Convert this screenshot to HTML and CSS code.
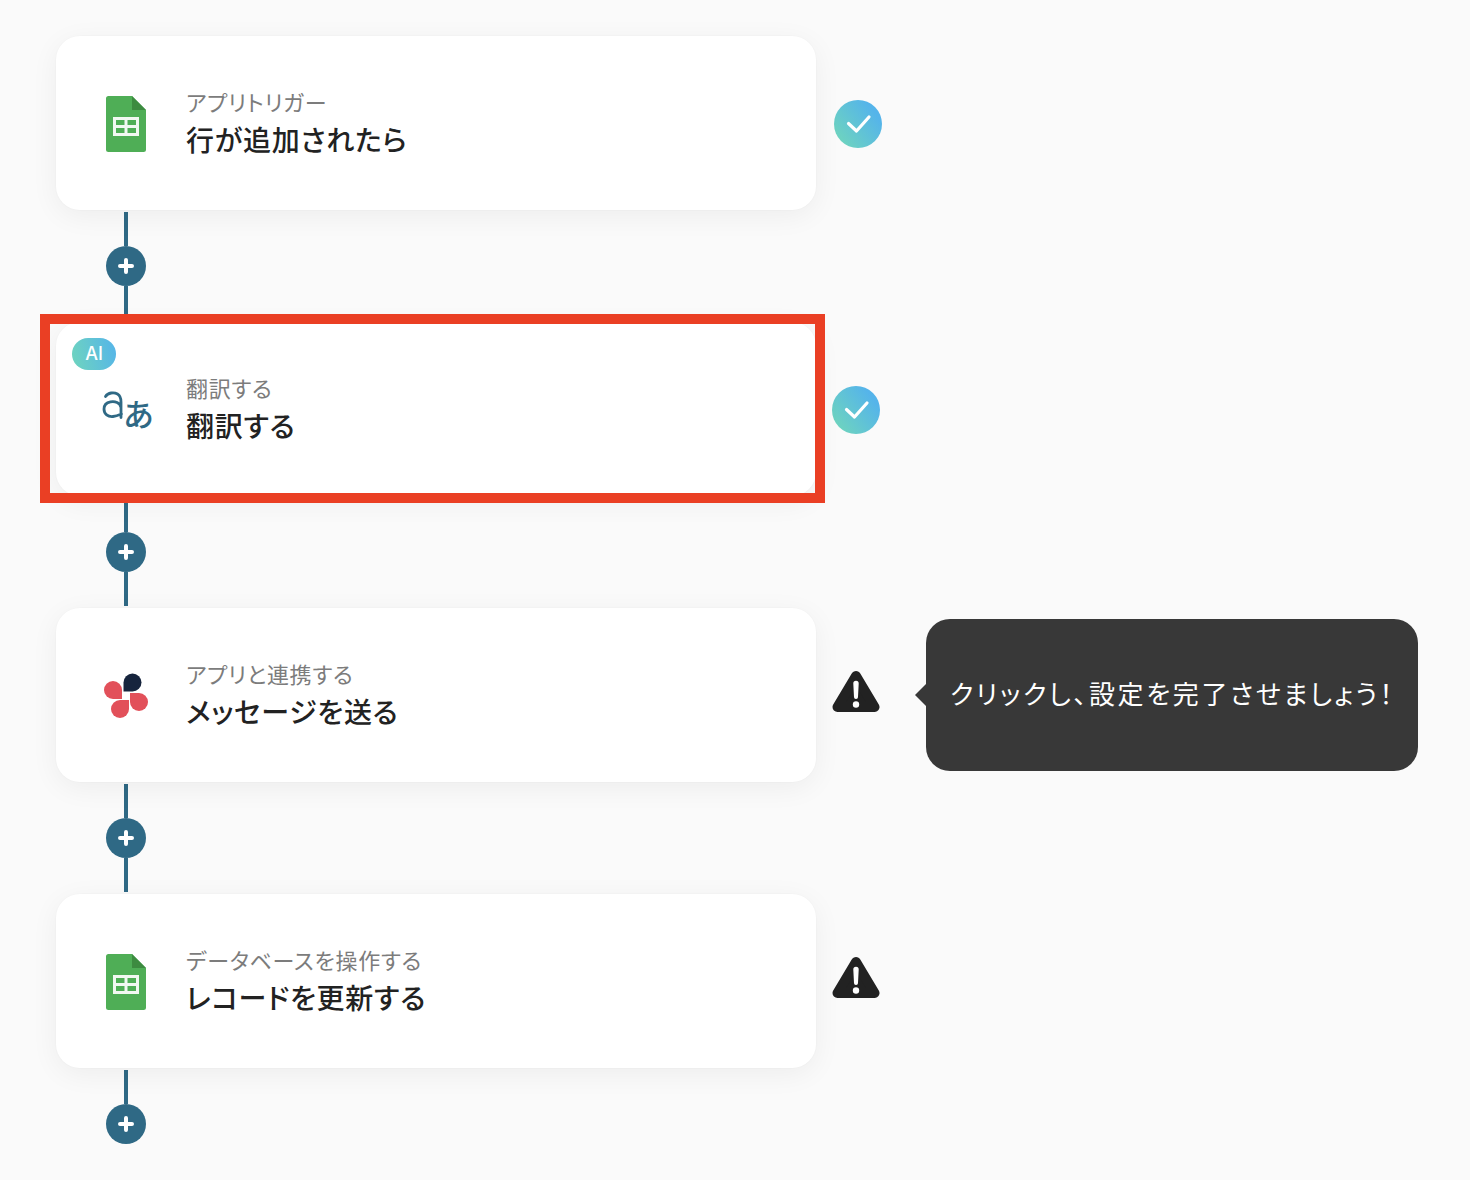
FILE: index.html
```html
<!DOCTYPE html>
<html lang="ja">
<head>
<meta charset="utf-8">
<title>フロー</title>
<link rel="stylesheet" href="styles.css">
</head>
<body>
<svg class="defs" width="0" height="0" aria-hidden="true">
  <defs>
    <linearGradient id="mint" x1="0" y1="1" x2="1" y2="0.25">
      <stop offset="0.1" stop-color="#6fd5bd"/>
      <stop offset="0.9" stop-color="#55b4ea"/>
    </linearGradient>
    <symbol id="sheet" viewBox="0 0 40 56">
      <path d="M2.5 0H26L40 14V53.5A2.5 2.5 0 0 1 37.5 56H2.5A2.5 2.5 0 0 1 0 53.5V2.500A2.500 2.500 0 0 1 2.500 0Z" fill="#4fae56"/>
      <path d="M26 0L40 14H26Z" fill="#3d8b40"/>
      <path fill-rule="evenodd" d="M7 21H33V40H7ZM10 24V29H18.500V24ZM21.500 24V29H30V24ZM10 32V37H18.500V32ZM21.500 32V37H30V32Z" fill="#f1f8f1"/>
    </symbol>
    <symbol id="check" viewBox="0 0 48 48">
      <circle cx="24" cy="24" r="24" fill="url(#mint)"/>
      <path d="M14.500 23.500L22.500 31L35 17" fill="none" stroke="#fff" stroke-width="3.200" stroke-linecap="round" stroke-linejoin="round"/>
    </symbol>
    <symbol id="warn" viewBox="0 0 48 44">
      <path d="M24 6L42.500 37H5.500Z" fill="#222" stroke="#222" stroke-width="10" stroke-linejoin="round"/>
      <path d="M22 13.500A2 2 0 0 1 26 13.500L25.300 27A1.300 1.300 0 0 1 22.700 27Z" fill="#fff" stroke="#fff" stroke-width="1.400" stroke-linejoin="round"/>
      <circle cx="24" cy="34.500" r="3.200" fill="#fff"/>
    </symbol>
    <symbol id="plus" viewBox="0 0 16 16">
      <path d="M8 2V14M2 8H14" stroke="#fff" stroke-width="4" stroke-linecap="round"/>
    </symbol>
  </defs>
</svg>

<main class="flow">
  <section class="step">
    <div class="row">
      <article class="card">
        <svg class="icon-sheet"><use href="#sheet"/></svg>
        <div class="text">
          <p class="label">アプリトリガー</p>
          <h2 class="title">行が追加されたら</h2>
        </div>
      </article>
      <svg class="status"><use href="#check"/></svg>
    </div>
    <div class="link"><span class="line"></span><span class="add"><svg class="add-icon"><use href="#plus"/></svg></span><span class="line"></span></div>
  </section>

  <section class="step">
    <div class="row row-tight">
      <article class="card">
        <span class="ai">AI</span>
        <span class="icon-translate">
          <svg class="latin" viewBox="0 0 24 32"><path d="M3.500 6.500C6 2.500 12 2 15.500 4C18.500 5.800 19 8.500 19 12V27.500M19 17.500C18 12.500 13 11 8.500 11.800C4 12.600 2 15.500 2 19C2 24 6 27 11 26.500C14 26.200 17 25 19.500 24" fill="none" stroke="#2f6985" stroke-width="2.800" stroke-linecap="round" stroke-linejoin="round"/></svg>
          <span class="kana">あ</span>
        </span>
        <div class="text">
          <p class="label">翻訳する</p>
          <h2 class="title">翻訳する</h2>
        </div>
      </article>
      <svg class="status"><use href="#check"/></svg>
      <div class="highlight"></div>
    </div>
    <div class="link"><span class="line"></span><span class="add"><svg class="add-icon"><use href="#plus"/></svg></span><span class="line"></span></div>
  </section>

  <section class="step">
    <div class="row row-tight">
      <article class="card">
        <svg class="icon-flower" viewBox="0 0 44 46">
          <path d="M19.500 18.500V9.500A9 9 0 1 1 28.500 18.500Z" fill="#16243d"/>
          <path d="M18 26H9A9 9 0 1 1 18 17Z" fill="#e2505a"/>
          <path d="M26 20H35A9 9 0 1 1 26 29Z" fill="#e2505a"/>
          <path d="M25 27V36A9 9 0 1 1 16 27Z" fill="#e2505a"/>
        </svg>
        <div class="text">
          <p class="label">アプリと連携する</p>
          <h2 class="title">メッセージを送る</h2>
        </div>
      </article>
      <svg class="status status-warn"><use href="#warn"/></svg>
      <div class="tooltip">クリックし、設定を完了させましょう！</div>
    </div>
    <div class="link"><span class="line"></span><span class="add"><svg class="add-icon"><use href="#plus"/></svg></span><span class="line"></span></div>
  </section>

  <section class="step">
    <div class="row row-tight">
      <article class="card">
        <svg class="icon-sheet"><use href="#sheet"/></svg>
        <div class="text">
          <p class="label">データベースを操作する</p>
          <h2 class="title">レコードを更新する</h2>
        </div>
      </article>
      <svg class="status status-warn"><use href="#warn"/></svg>
    </div>
    <div class="link"><span class="line"></span><span class="add"><svg class="add-icon"><use href="#plus"/></svg></span></div>
  </section>
</main>
</body>
</html>
```

FILE: styles.css
```css
* { box-sizing: border-box; }

html, body { height: 100%; }

body {
  margin: 0;
  background: #fafafa;
  color: #222;
  font-family: "Noto Sans CJK JP", "Noto Sans", sans-serif;
  overflow: hidden;
}

.defs { position: absolute; }

.flow {
  display: flex;
  flex-direction: column;
  padding: 36px 0 0 56px;
}

.row {
  position: relative;
  display: flex;
  align-items: center;
  gap: 18px;
}

.row-tight { gap: 16px; }

.card {
  position: relative;
  display: flex;
  align-items: center;
  gap: 40px;
  width: 760px;
  height: 174px;
  padding-left: 50px;
  background: #fff;
  border-radius: 24px;
  box-shadow: 0 0 0 1px rgba(0, 0, 0, 0.012), 0 6px 28px rgba(0, 0, 0, 0.055);
}

.icon-sheet {
  display: block;
  width: 40px;
  height: 56px;
  margin-top: 2px;
  flex: none;
}

.text { margin-bottom: 2px; }

.label {
  margin: 0;
  font-size: 22px;
  line-height: 30px;
  color: #7c7c7c;
  letter-spacing: 0.7px;
  font-feature-settings: "palt";
}

.title {
  margin: 3px 0 0;
  font-size: 28px;
  line-height: 40px;
  font-weight: 500;
  color: #222;
  letter-spacing: 0.75px;
  font-feature-settings: "palt";
}

.status {
  display: block;
  flex: none;
  width: 48px;
  height: 48px;
  margin-top: 2px;
}

.status-warn {
  height: 44px;
  margin-top: -6px;
}

.link {
  display: flex;
  flex-direction: column;
  align-items: center;
  width: 40px;
  margin: 2px 0 2px 50px;
}

.line {
  display: block;
  width: 4px;
  height: 34px;
  background: #2f6985;
}

.add {
  display: flex;
  align-items: center;
  justify-content: center;
  width: 40px;
  height: 40px;
  border-radius: 50%;
  background: #2f6985;
}

.add-icon {
  display: block;
  width: 16px;
  height: 16px;
}

.ai {
  position: absolute;
  top: 16px;
  left: 16px;
  width: 44px;
  height: 32px;
  border-radius: 16px;
  background: linear-gradient(75deg, #6fd5bd, #55b4ea);
  color: #fff;
  font-family: Inter, "Liberation Sans", sans-serif;
  font-size: 18px;
  font-weight: 500;
  line-height: 32px;
  text-align: center;
}

.icon-translate {
  display: flex;
  align-items: flex-end;
  width: 52px;
  height: 44px;
  margin: 0 -8px 0 -4px;
  flex: none;
}

.latin {
  display: block;
  width: 24px;
  height: 32px;
  margin-bottom: 9px;
  flex: none;
}

.kana {
  margin-left: -3px;
  font-size: 31px;
  line-height: 36px;
  font-weight: 500;
  color: #2f6985;
}

.icon-flower {
  display: block;
  width: 44px;
  height: 46px;
  margin: 2px -2px 0;
  flex: none;
}

.highlight {
  position: absolute;
  top: -8px;
  left: -16px;
  width: 785px;
  height: 189px;
  border: 10px solid #ea3f24;
  pointer-events: none;
}

.tooltip {
  position: absolute;
  top: 11px;
  left: 870px;
  display: flex;
  align-items: center;
  width: 492px;
  height: 152px;
  padding: 0 0 5px 24px;
  border-radius: 24px;
  background: #383838;
  color: #fff;
  font-size: 26px;
  letter-spacing: 2.6px;
  font-feature-settings: "palt";
  white-space: nowrap;
}

.tooltip::before {
  content: "";
  position: absolute;
  top: 64px;
  left: -11px;
  width: 12px;
  height: 24px;
  background: #383838;
  clip-path: polygon(100% 0, 100% 100%, 0 50%);
}
```
